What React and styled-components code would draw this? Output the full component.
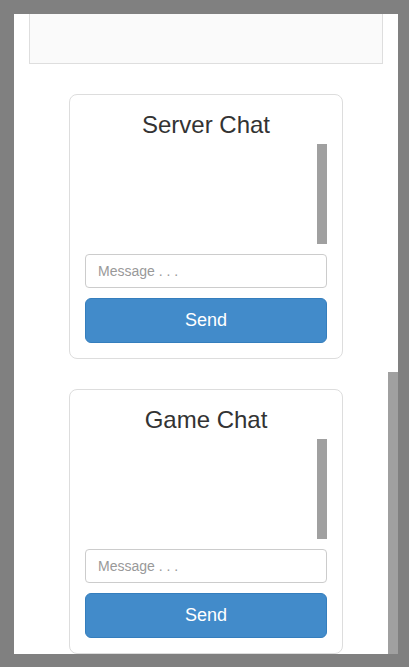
import React from "react";
import styled, { createGlobalStyle } from "styled-components";

const Global = createGlobalStyle`
  html, body { margin: 0; padding: 0; background: #808080; }
  body { font-family: "Liberation Sans", Arial, sans-serif; }
  * { box-sizing: border-box; }
`;

const Frame = styled.div`
  position: relative;
  width: 384px;
  height: 640px;
  margin: 14px 0 0 14px;
  background: #ffffff;
  overflow: hidden;
`;

const Content = styled.div`
  display: flex;
  flex-direction: column;
  justify-content: flex-end;
  height: 100%;
  padding: 0 15px;
`;

const TopPanel = styled.div`
  flex-shrink: 0;
  height: 140px;
  background: #fafafa;
  border: 1px solid #dedede;
`;

const Card = styled.div`
  flex-shrink: 0;
  align-self: center;
  width: 274px;
  margin-top: 30px;
  padding: 15px;
  border: 1px solid #dddddd;
  border-radius: 8px;
  background: #ffffff;
  display: flex;
  flex-direction: column;
`;

const Title = styled.h3`
  margin: 2px 0 6px;
  height: 26px;
  font-size: 24px;
  line-height: 26px;
  font-weight: 400;
  color: #333333;
  text-align: center;
`;

const MessageArea = styled.div`
  display: flex;
  height: 100px;
`;

const MessageList = styled.div`
  flex: 1;
`;

const AreaThumb = styled.div`
  width: 10px;
  background: #a0a0a0;
`;

const Input = styled.input`
  display: block;
  width: 100%;
  height: 34px;
  margin-top: 10px;
  padding: 6px 12px;
  font-family: "Liberation Sans", Arial, sans-serif;
  font-size: 14px;
  color: #555555;
  border: 1px solid #cccccc;
  border-radius: 4px;
  outline: none;
  &::placeholder { color: #999999; }
`;

const SendButton = styled.button`
  display: block;
  width: 100%;
  height: 45px;
  margin-top: 10px;
  padding: 0;
  font-family: "Liberation Sans", Arial, sans-serif;
  font-size: 18px;
  color: #ffffff;
  background: #428bca;
  border: 1px solid #357ebd;
  border-radius: 6px;
  cursor: pointer;
`;

const PageThumb = styled.div`
  position: absolute;
  right: 0;
  bottom: 0;
  width: 10px;
  height: 282px;
  background: #a0a0a0;
`;

function ChatCard({ title }) {
  return (
    <Card>
      <Title>{title}</Title>
      <MessageArea>
        <MessageList />
        <AreaThumb />
      </MessageArea>
      <Input placeholder="Message . . ." />
      <SendButton>Send</SendButton>
    </Card>
  );
}

export default function App() {
  return (
    <>
      <Global />
      <Frame>
        <Content>
          <TopPanel />
          <ChatCard title="Server Chat" />
          <ChatCard title="Game Chat" />
        </Content>
        <PageThumb />
      </Frame>
    </>
  );
}
